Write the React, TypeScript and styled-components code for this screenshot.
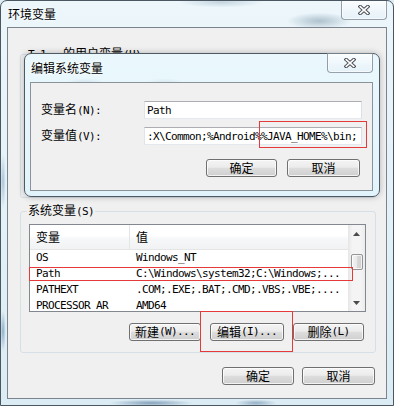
import React from 'react';
import styled, { createGlobalStyle } from 'styled-components';

const GlobalStyle = createGlobalStyle`
  html, body {
    margin: 0;
    padding: 0;
    background: #dcecf4;
  }
  body {
    font-family: "Noto Sans CJK SC", "Liberation Sans", sans-serif;
    font-size: 12px;
    color: #000;
  }
  * {
    box-sizing: border-box;
  }
`;

const Han = styled.span<{ $gap?: number }>`
  font-family: "Noto Sans CJK SC", sans-serif;
  font-size: 12px;
  letter-spacing: 0;
  margin-left: ${p => p.$gap || 0}px;
`;

const Latin = styled.span`
  font-family: "DejaVu Sans Mono", "Liberation Mono", monospace;
  font-size: 11px;
  letter-spacing: -0.62px;
`;

const Window = styled.div`
  position: relative;
  width: 394px;
  height: 406px;
  display: flex;
  flex-direction: column;
  padding: 0 6px 6px 6px;
  border: 1px solid #4a5661;
  border-radius: 7px 7px 0 0;
  overflow: hidden;
  background:
    radial-gradient(46px 12px at 318px 20px, rgba(100, 130, 150, 0.45), transparent 70%),
    radial-gradient(60px 8px at 220px 1px, rgba(120, 150, 170, 0.35), transparent 70%),
    radial-gradient(60px 5px at 150px 402px, rgba(60, 100, 140, 0.55), transparent 70%),
    radial-gradient(30px 5px at 255px 402px, rgba(60, 100, 140, 0.45), transparent 70%),
    radial-gradient(4px 30px at 2px 330px, rgba(60, 110, 160, 0.5), transparent 70%),
    radial-gradient(4px 40px at 2px 180px, rgba(60, 110, 160, 0.35), transparent 70%),
    linear-gradient(180deg, #ecf6fb 0%, #e2f0f7 60%, #dcecf4 100%);
`;

const Dialog = styled.div`
  position: absolute;
  left: 23px;
  top: 52px;
  width: 356px;
  display: flex;
  flex-direction: column;
  padding: 0 6px 5px 5px;
  border: 1px solid #4d5a64;
  border-radius: 7px;
  box-shadow: 0 0 6px rgba(0, 0, 0, 0.25);
  background:
    radial-gradient(30px 8px at 60px 30px, rgba(110, 140, 160, 0.25), transparent 70%),
    radial-gradient(30px 8px at 140px 30px, rgba(110, 140, 160, 0.2), transparent 70%),
    linear-gradient(180deg, #eaf8fd 0%, #e2f4fb 100%);
`;

const TitleBar = styled.div`
  height: 28px;
  display: flex;
  align-items: center;
`;

const Title = styled.div`
  margin-left: 1px;
  font-size: 12px;
  line-height: 14px;
  text-shadow: 0 0 5px #fff, 0 0 3px #fff;
`;

const CloseButton = styled.div`
  align-self: flex-start;
  margin-top: -1px;
  margin-left: auto;
  width: 46px;
  height: 20px;
  display: flex;
  align-items: center;
  justify-content: center;
  border: 1px solid rgba(70, 85, 100, 0.55);
  border-radius: 0 0 4px 4px;
  background: linear-gradient(180deg, rgba(255, 255, 255, 0.75) 0%, rgba(225, 238, 246, 0.6) 100%);
  box-shadow: inset 0 0 0 1px rgba(255, 255, 255, 0.6);
`;

const Client = styled.div<{ $pad: string; $border: string }>`
  flex: 1;
  display: flex;
  flex-direction: column;
  padding: ${p => p.$pad};
  border: 1px solid ${p => p.$border};
  background: #f0f0f0;
`;

const Group = styled.fieldset<{ $h?: number; $gap?: number }>`
  margin: ${p => p.$gap || 0}px 0 0 0;
  padding: 0 9px 11px 8px;
  border: 1px solid #d5dfe5;
  border-radius: 3px;
  min-inline-size: 0;
  ${p => (p.$h ? `height: ${p.$h}px;` : '')}
`;

const Legend = styled.legend`
  margin-left: -2px;
  padding: 0 1px;
  line-height: 14px;
  white-space: pre;
`;

const List = styled.div`
  margin-top: 5px;
  height: 88px;
  display: flex;
  border: 1px solid #828790;
  background: #fff;
`;

const ListBody = styled.div`
  flex: 1;
  display: flex;
  flex-direction: column;
  overflow: hidden;
`;

const HeaderRow = styled.div`
  height: 25px;
  flex-shrink: 0;
  display: grid;
  grid-template-columns: 100px 1fr;
  border-bottom: 1px solid #e5e5e5;
  background: linear-gradient(180deg, #ffffff 0%, #ffffff 45%, #f7f8fa 55%, #f1f2f4 100%);
`;

const HeaderCell = styled.div<{ $divider?: boolean }>`
  display: flex;
  align-items: center;
  padding-left: 6px;
  line-height: 14px;
  border-right: ${p => (p.$divider ? '1px solid #e5e5e5' : 'none')};
`;

const Row = styled.div`
  height: 16px;
  flex-shrink: 0;
  display: grid;
  grid-template-columns: 100px 1fr;
  align-items: center;
  font-family: "DejaVu Sans Mono", "Liberation Mono", monospace;
  font-size: 11px;
  letter-spacing: -0.62px;
  line-height: 16px;
`;

const Cell = styled.div`
  padding-left: 6px;
  white-space: nowrap;
  overflow: hidden;
`;

const ScrollBar = styled.div`
  width: 17px;
  flex-shrink: 0;
  display: flex;
  flex-direction: column;
  background: linear-gradient(90deg, #e6e6e6 0%, #f4f4f4 25%, #f4f4f4 75%, #ebebeb 100%);
`;

const ScrollArrow = styled.div`
  height: 17px;
  display: flex;
  align-items: center;
  justify-content: center;
`;

const Track = styled.div`
  flex: 1;
  padding-top: 12px;
`;

const Thumb = styled.div`
  width: 12px;
  height: 16px;
  margin-left: 3px;
  border: 1px solid #959595;
  border-radius: 2px;
  background: linear-gradient(90deg, #f4f4f4 0%, #e9e9e9 50%, #d9d9d9 51%, #d0d0d0 100%);
  box-shadow: inset 0 0 0 1px rgba(255, 255, 255, 0.7);
`;

const ButtonRow = styled.div<{ $top: number; $gap: number; $right: number }>`
  display: flex;
  justify-content: flex-end;
  gap: ${p => p.$gap}px;
  margin-top: ${p => p.$top}px;
  padding-right: ${p => p.$right}px;
`;

const Button = styled.button<{ $w: number }>`
  width: ${p => p.$w}px;
  height: 18px;
  padding: 0;
  display: flex;
  align-items: center;
  justify-content: center;
  border: 1px solid #707070;
  border-radius: 3px;
  background: linear-gradient(180deg, #f4f4f4 0%, #ececec 45%, #dddddd 52%, #cfcfcf 100%);
  box-shadow: inset 0 0 0 1px rgba(255, 255, 255, 0.75);
  font-family: "Noto Sans CJK SC", sans-serif;
  font-size: 12px;
  line-height: 16px;
  color: #000;
  white-space: pre;
`;

const Fields = styled.div`
  display: grid;
  grid-template-columns: 103px 1fr;
  row-gap: 8px;
  align-items: center;
`;

const FieldLabel = styled.label`
  line-height: 16px;
  white-space: pre;
`;

const TextBox = styled.input`
  width: 100%;
  height: 18px;
  padding: 0 2px;
  border: 1px solid;
  border-color: #abadb3 #dbdfe6 #e3e9ef #e2e3ea;
  background: #fff;
  outline: none;
  font-family: "DejaVu Sans Mono", "Liberation Mono", monospace;
  font-size: 11px;
  letter-spacing: -0.62px;
  color: #000;
`;

const Mark = styled.div<{ $x: number; $y: number; $w: number; $h: number }>`
  position: absolute;
  left: ${p => p.$x}px;
  top: ${p => p.$y}px;
  width: ${p => p.$w}px;
  height: ${p => p.$h}px;
  border: 1px solid #e53a3a;
  pointer-events: none;
`;

const CloseIcon = () => (
  <svg width="12" height="10" viewBox="0 0 12 10">
    <path d="M2.2 1.6 L9.8 8.4 M9.8 1.6 L2.2 8.4" stroke="#4b4f55" strokeWidth="3.6" strokeLinecap="square" />
    <path d="M2.2 1.6 L9.8 8.4 M9.8 1.6 L2.2 8.4" stroke="#fff" strokeWidth="1.6" strokeLinecap="square" />
  </svg>
);

const Arrow = ({ up }: { up: boolean }) => (
  <svg width="7" height="4" viewBox="0 0 7 4">
    <polygon points={up ? '3.5,0 7,4 0,4' : '0,0 7,0 3.5,4'} fill="#4a4a4a" />
  </svg>
);

const systemVars = [
  { name: 'OS', value: 'Windows_NT' },
  { name: 'Path', value: 'C:\\Windows\\system32;C:\\Windows;...' },
  { name: 'PATHEXT', value: '.COM;.EXE;.BAT;.CMD;.VBS;.VBE;....' },
  { name: 'PROCESSOR_AR', value: 'AMD64' },
];

const App: React.FC = () => {
  return (
    <>
      <GlobalStyle />
      <Window>
        <TitleBar>
          <Title>环境变量</Title>
          <CloseButton>
            <CloseIcon />
          </CloseButton>
        </TitleBar>
        <Client $pad="18px 10px 13px 12px" $border="#7b848c">
          <Group $h={152}>
            <Legend>
              <Latin>T-1</Latin>
              <Han $gap={17}>的用户变量</Han>
              <Latin>(U)</Latin>
            </Legend>
          </Group>
          <Group $gap={5}>
            <Legend>
              <Han>系统变量</Han>
              <Latin>(S)</Latin>
            </Legend>
            <List>
              <ListBody>
                <HeaderRow>
                  <HeaderCell $divider>变量</HeaderCell>
                  <HeaderCell>值</HeaderCell>
                </HeaderRow>
                {systemVars.map(v => (
                  <Row key={v.name}>
                    <Cell>{v.name}</Cell>
                    <Cell>{v.value}</Cell>
                  </Row>
                ))}
              </ListBody>
              <ScrollBar>
                <ScrollArrow>
                  <Arrow up />
                </ScrollArrow>
                <Track>
                  <Thumb />
                </Track>
                <ScrollArrow>
                  <Arrow up={false} />
                </ScrollArrow>
              </ScrollBar>
            </List>
            <ButtonRow $top={11} $gap={9} $right={2}>
              <Button $w={72}>
                <Han>新建</Han>
                <Latin>(W)...</Latin>
              </Button>
              <Button $w={74}>
                <Han>编辑</Han>
                <Latin>(I)...</Latin>
              </Button>
              <Button $w={71}>
                <Han>删除</Han>
                <Latin>(L)</Latin>
              </Button>
            </ButtonRow>
          </Group>
          <ButtonRow $top={14} $gap={8} $right={1}>
            <Button $w={72}>确定</Button>
            <Button $w={73}>取消</Button>
          </ButtonRow>
        </Client>

        <Dialog>
          <TitleBar>
            <Title>编辑系统变量</Title>
            <CloseButton>
              <CloseIcon />
            </CloseButton>
          </TitleBar>
          <Client $pad="18px 10px 13px 10px" $border="#8a939a">
            <Fields>
              <FieldLabel>
                <Han>变量名</Han>
                <Latin>(N):</Latin>
              </FieldLabel>
              <TextBox readOnly defaultValue="Path" />
              <FieldLabel>
                <Han>变量值</Han>
                <Latin>(V):</Latin>
              </FieldLabel>
              <TextBox readOnly defaultValue=":X\Common;%Android%%JAVA_HOME%\bin;" />
            </Fields>
            <ButtonRow $top={14} $gap={10} $right={2}>
              <Button $w={71}>确定</Button>
              <Button $w={73}>取消</Button>
            </ButtonRow>
          </Client>
        </Dialog>

        <Mark $x={258} $y={120} $w={108} $h={27} />
        <Mark $x={28} $y={266} $w={324} $h={14} />
        <Mark $x={199} $y={310} $w={93} $h={41} />
      </Window>
    </>
  );
};

export default App;
